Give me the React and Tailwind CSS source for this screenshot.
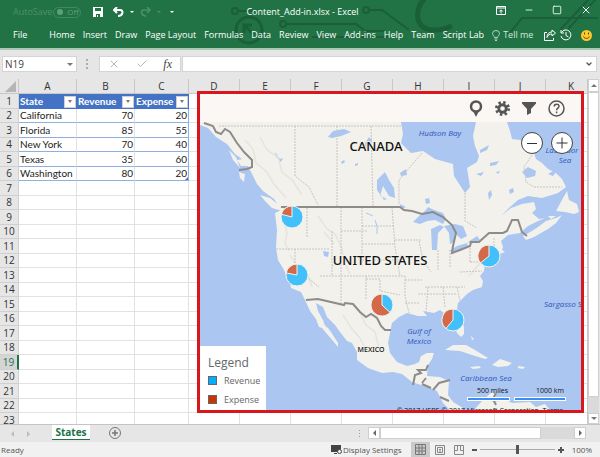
import React, { useState } from 'react';
import {
  FiMinus,
  FiSquare,
  FiX,
  FiCheck,
  FiChevronDown,
} from 'react-icons/fi';

const tabs = ['Home', 'Insert', 'Draw', 'Page Layout', 'Formulas', 'Data', 'Review', 'View', 'Add-ins', 'Help', 'Team', 'Script Lab'];

const columns = ['A', 'B', 'C', 'D', 'E', 'F', 'G', 'H', 'I', 'J', 'K'];

const states = [
  { state: 'California', revenue: 70, expense: 20 },
  { state: 'Florida', revenue: 85, expense: 55 },
  { state: 'New York', revenue: 70, expense: 40 },
  { state: 'Texas', revenue: 35, expense: 60 },
  { state: 'Washington', revenue: 80, expense: 20 },
];

const pies = [
  { name: 'Washington', x: 292, y: 217, expense: 0.21 },
  { name: 'California', x: 297, y: 275, expense: 0.22 },
  { name: 'Texas', x: 382, y: 305, expense: 0.63 },
  { name: 'New York', x: 489, y: 256, expense: 0.36 },
  { name: 'Florida', x: 453, y: 320, expense: 0.39 },
];

// Thin circuit lines behind the title and the ribbon tabs
const Circuit = () => (
  <svg className="pointer-events-none absolute inset-y-0 left-[230px] h-12 w-[370px]" viewBox="230 0 370 48" fill="none" stroke="#1a5f38" strokeWidth="2">
    <circle cx="235" cy="11" r="3" />
    <path d="M238 11h17" />
    <circle cx="249" cy="30" r="13" strokeWidth="3" />
    <path d="M254 35l-9-9M244 33v-8h8" strokeWidth="3" />
    <circle cx="283" cy="24" r="3" />
    <path d="M286 24h70l9 7h20" />
    <circle cx="366" cy="10" r="3" />
    <path d="M369 10h13l27 20" />
    <path d="M312 37h78" />
    <path d="M425 -2c-12 12-10 33 10 32 8 0 12-2 17-4" strokeWidth="5" />
    <path d="M508 35l14-17h76M560 30l29-31M567 30l29-31" />
  </svg>
);

const TitleBar = () => (
  <div className="relative flex h-6 items-center pl-[13px] pr-2">
    <div className="flex flex-1 items-center">
      <span className="text-[9px] text-[#4e9068]">AutoSave</span>
      <button className="ml-[1px] flex h-[11px] w-7 items-center gap-1 rounded-full border border-[#418a5e] pl-[3px] text-[8px] leading-none text-[#5f9f7a]">
        <span className="size-[6px] rounded-full bg-[#5f9f7a]" />
        Off
      </button>
      <button aria-label="Save" className="ml-3">
        <svg className="size-[10px]" viewBox="0 0 10 10">
          <path d="M0 0h10v10H0z" fill="#fff" />
          <path d="M2 1h6v3H2zM3 7h4v3H3z" fill="#217346" />
          <path d="M4 8h1v2H4z" fill="#fff" />
        </svg>
      </button>
      <button aria-label="Undo" className="ml-[10px]">
        <svg className="h-[10px] w-[11px]" viewBox="0 0 11 10" fill="none" stroke="#fff" strokeWidth="2">
          <path d="M4 0L1 3l3 3M1 3h6c4 0 3 6-2 6" />
        </svg>
      </button>
      <button aria-label="Undo history" className="ml-[6px] border-x-2 border-t-2 border-x-transparent border-t-white" />
      <button aria-label="Redo" className="ml-[6px]">
        <svg className="h-[10px] w-[11px]" viewBox="0 0 11 10" fill="none" stroke="#4e9068" strokeWidth="1.5">
          <path d="M7 0l3 3-3 3M10 3H4c-4 0-3 6 2 6" />
        </svg>
      </button>
      <button aria-label="Redo history" className="ml-[6px] border-x-2 border-t-2 border-x-transparent border-t-[#4e9068]" />
      <button aria-label="Customize toolbar" className="ml-[9px] border-x-2 border-t-2 border-x-transparent border-t-white" />
    </div>
    <h1 className="whitespace-nowrap text-[9px] text-white">Content_Add-in.xlsx - Excel</h1>
    <div className="flex flex-1 items-center justify-end gap-[18px] pb-1 text-white">
      <button aria-label="Ribbon display options">
        <svg className="h-[9px] w-[10px]" viewBox="0 0 10 9" fill="none" stroke="#fff">
          <path d="M.5.5h9v8h-9zM.5 2h9M5 7.500V4M3.300 5.500L5 3.800l1.700 1.700" />
        </svg>
      </button>
      <button aria-label="Minimize"><FiMinus className="size-[10px]" /></button>
      <button aria-label="Maximize"><FiSquare className="size-[10px]" /></button>
      <button aria-label="Close"><FiX className="size-3" /></button>
    </div>
  </div>
);

const RibbonTabs = () => (
  <nav className="relative flex h-6 items-center whitespace-nowrap pb-[2px] pl-[13px] pr-2 text-[9px] text-white">
    <button className="mr-[22px]">File</button>
    <div className="flex gap-2">
      {tabs.map((tab) => (
        <button key={tab}>{tab}</button>
      ))}
    </div>
    <button className="ml-2 flex items-center gap-[3px] text-[#d5e6dc]">
      <svg className="h-[11px] w-2" viewBox="0 0 8 11" fill="none" stroke="#b5d3c1">
        <path d="M2.500 7.500C2.500 6 .5 5.500.5 3.500a3.500 3 0 017 0c0 2-2 2.500-2 4zM2.500 9h3M3 10.500h2" />
      </svg>
      Tell me
    </button>
    <div className="ml-auto flex items-center">
      <button aria-label="Share">
        <svg className="size-3" viewBox="0 0 12 12" fill="none" stroke="#fff">
          <path d="M3 3.500H.5v8h9V9M8 1l3.500 3L8 7V5C5.500 5 4 6 3 8.500 3 5 5 3 8 3z" />
        </svg>
      </button>
      <button aria-label="History" className="ml-1">
        <svg className="size-3" viewBox="0 0 12 12" fill="none" stroke="#fff">
          <path d="M1.500 3.500A5 5 0 111 7M1 1v3h3M6 3v3.500l2.500 1.500" />
        </svg>
      </button>
      <button aria-label="Feedback" className="ml-[9px]">
        <svg className="size-[11px]" viewBox="0 0 11 11">
          <circle cx="5.500" cy="5.500" r="5.500" fill="#fdc92c" />
          <path d="M3.500 2.500v2M7.500 2.500v2M2.500 6.500c1 2.500 5 2.500 6 0" fill="none" stroke="#5c4411" />
        </svg>
      </button>
    </div>
  </nav>
);

const FormulaBar = () => (
  <div className="flex h-[29px] items-center pb-[1px] pl-[2px] pr-[3px]">
    <div className="flex h-4 w-[75px] items-center border border-[#d4d4d4] bg-white pl-[2px] pr-[3px]">
      <input aria-label="Name box" defaultValue="N19" className="w-full min-w-0 text-[10px] leading-none text-[#444] outline-none" />
      <span className="border-x-[3px] border-t-[3px] border-x-transparent border-t-[#777]" />
    </div>
    <div className="mx-[9px] flex flex-col gap-[2px]">
      <span className="size-[2px] bg-[#aaa]" />
      <span className="size-[2px] bg-[#aaa]" />
      <span className="size-[2px] bg-[#aaa]" />
    </div>
    <div className="ml-[2px] flex h-4 w-[82px] items-center justify-between border border-[#d4d4d4] bg-white px-2 text-[#b5b5b5]">
      <button aria-label="Cancel"><FiX className="size-3" /></button>
      <button aria-label="Enter"><FiCheck className="size-3" /></button>
      <button aria-label="Insert function" className="font-['Liberation_Serif',serif] text-xs italic leading-none text-[#444]">fx</button>
    </div>
    <div className="ml-[1px] flex h-4 flex-1 items-center border border-[#d4d4d4] bg-white pr-[3px]">
      <input aria-label="Formula" className="h-3 min-w-0 flex-1 text-[10px] outline-none" />
      <FiChevronDown className="size-2 text-[#555]" strokeWidth={4} />
    </div>
  </div>
);

const FilterButton = ({ label }) => (
  <button aria-label={`Filter ${label}`} className="flex h-3 w-3 shrink-0 items-center justify-center border border-[#d0d0d0] bg-white">
    <span className="border-x-[2px] border-t-[3px] border-x-transparent border-t-[#777]" />
  </button>
);

// The last column runs past the right edge of the sheet
const Grid = () => (
  <table className="w-[calc(100%+10px)] table-fixed border-separate border-spacing-0 text-[10px] leading-[13px] text-[#222]">
    <colgroup>
      <col className="w-[19px]" />
      <col className="w-[58px]" />
      <col className="w-[58px]" />
      <col className="w-[54px]" />
      {columns.slice(3, 10).map((c) => (
        <col key={c} className="w-[51px]" />
      ))}
      <col />
    </colgroup>
    <thead>
      <tr className="h-[15px] bg-[#e6e6e6]">
        <th className="border-b border-r border-[#c8c8c8] p-0">
          <span className="float-right mr-[2px] border-b-[11px] border-l-[11px] border-b-[#b5b5b5] border-l-transparent" />
        </th>
        {columns.map((c) => (
          <th key={c} className="border-b border-r border-[#c8c8c8] p-0 font-normal text-[#333]">{c}</th>
        ))}
      </tr>
    </thead>
    <tbody>
      {Array.from({ length: 23 }, (_, i) => {
        const row = i + 1;
        const data = states[i - 1];
        const cell = data ? 'border-b-[#8fb0de]' : 'border-b-[#e2e2e2]';
        return (
          <tr key={row} className="odd:h-[15px] even:h-[14px]">
            <th
              className={`border-b border-[#d0d0d0] p-0 font-normal ${row === 19 ? 'border-r-2 border-r-[#217346] bg-[#d5d5d5] text-[#217346]' : 'border-r bg-[#e6e6e6] text-[#333]'}`}
            >
              {row}
            </th>
            {row === 1 ? (
              ['State', 'Revenue', 'Expense'].map((label) => (
                <th key={label} className="bg-[#4472c4] p-0">
                  <div className="flex items-center justify-between px-[1px] font-['Lato',sans-serif] font-bold text-white">
                    {label}
                    <FilterButton label={label} />
                  </div>
                </th>
              ))
            ) : (
              <>
                <td className={`border-b border-r p-0 pl-[1px] font-['Lato',sans-serif] ${cell} border-r-[#e2e2e2]`}>{data?.state}</td>
                <td className={`border-b border-r p-0 pr-[1px] text-right font-['Lato',sans-serif] ${cell} border-r-[#e2e2e2]`}>{data?.revenue}</td>
                <td className={`relative border-b border-r p-0 pr-[1px] text-right font-['Lato',sans-serif] ${cell} ${data ? 'border-r-[#8fb0de]' : 'border-r-[#e2e2e2]'}`}>
                  {data?.expense}
                  {row === 6 && <span className="absolute bottom-0 right-0 border-b-[3px] border-l-[3px] border-b-[#4472c4] border-l-transparent" />}
                </td>
              </>
            )}
            {columns.slice(3).map((c) => (
              <td key={c} className="border-b border-r border-[#e2e2e2] p-0" />
            ))}
          </tr>
        );
      })}
    </tbody>
  </table>
);

const Pie = ({ x, y, expense }) => {
  const r = 11;
  const a = expense * Math.PI * 2;
  const ex = x - r * Math.sin(a);
  const ey = y - r * Math.cos(a);
  const large = expense > 0.5 ? 1 : 0;
  return (
    <g stroke="#f6f3ec" strokeWidth="1">
      <circle cx={x} cy={y} r={r} fill="#41c0fb" />
      <path d={`M${x} ${y}V${y - r}A${r} ${r} 0 ${large} 0 ${ex} ${ey}Z`} fill="#d4694a" />
    </g>
  );
};

const MapView = () => (
  <svg className="block h-full w-full" viewBox="200 122 381 289" preserveAspectRatio="xMinYMin slice" role="img" aria-label="Map of revenue and expense by state">
    <rect x="200" y="122" width="800" height="600" fill="#abc6f1" />

    {/* mainland */}
    <path
      fill="#f2f1ec"
      d="M200 122H507L510 131 512 139 520 140 527 143 533 150 536 159 542 163 548 169 556 173 562 179 566 187 558 193 542 198 528 196 518 200 510 207 501 216 511 208 522 204 534 202 536 209 532 213 539 219 545 218 538 221 528 226 520 233 508 235 501 241 503 247 502 250 505 252 497 255 490 260 485 264 484 271 480 276 483 281 482 287 473 290 467 294 458 303 457 310 461 318 464 327 464 334 461 337 457 333 455 327 450 318 440 310 434 313 423 311 427 316 418 316 407 313 399 317 392 323 390 333 388 343 390 353 397 362 407 366 415 364 419 362 421 356 427 353 434 353 432 359 428 365 427 376 440 377 449 381 448 395 453 402 463 408 459 411H451L443 403 440 397 437 391 427 387 412 382 402 374 393 372 382 373 368 368 357 360 357 352 352 343 347 341 340 332 335 325 327 317 323 307 316 303 318 311 325 324 331 332 338 343 338 347 333 341 327 334 322 328 319 327 316 319 310 311 305 300 301 292 291 288 290 282 287 278 284 270 278 260 276 248 277 230 275 213 281 210 274 199 263 191 257 184 252 174 246 162 235 154 227 144 216 137 208 128 200 125Z"
    />
    {/* west coast islands */}
    <path fill="#f2f1ec" d="M260 195L270 198 280 206 282 211 272 208 265 201ZM239 172L245 174 244 182 240 178ZM229 150L236 157 240 168 233 160ZM237 160L249 158 250 166 241 166Z" />
    {/* Newfoundland, Nova Scotia */}
    <path fill="#f2f1ec" d="M546 221L556 218 562 215 556 223 548 229 534 237 526 240 523 236 532 231 538 227ZM556 211L563 198 567 191 569 200 577 204 579 212 574 214 565 212ZM548 216h8l-5 3Z" />
    {/* Caribbean and South America */}
    <path fill="#f2f1ec" d="M445 350L453 345 466 345 475 350 488 358 485 359 472 355 460 351ZM492 365L500 359 512 363 508 366 498 367ZM470 367l9-1 2 2-8 1zM518 366l7 1-2 2-5-1zM473 411L482 401 492 392 496 396 492 402 506 400 512 403 530 402 536 407 545 404 551 411ZM471 336l3 3-2 1z" />

    {/* Hudson Bay */}
    <path fill="#abc6f1" d="M401 122L403 134 401 143 411 153 423 151 435 159 453 164 454 176 465 193 470 187 467 168 477 162 479 156 475 146 473 136 476 122Z" />
    {/* lakes */}
    <g fill="#abc6f1">
      <path d="M413 222L420 215 425 211 428 207 434 210 443 213 446 219 443 224 435 220 427 221 420 224ZM431 229L440 225 444 227 438 233 437 250 432 250ZM444 226L455 224 463 226 467 236 461 239 455 233 454 242 450 244 449 233ZM449 251L457 246 467 243 468 246 457 251ZM468 242L477 236 480 240 471 244Z" />
      <path d="M328 137L333 131 344 129 351 132 341 136 332 138ZM377 180L385 172 389 180 394 188 395 198 389 196 383 186 380 196 387 199 384 200 377 190ZM364 145L369 137 372 140 365 152ZM275 152l5 7 3-1-2 4-5-5zM323 322l5 3-1 3zM323 251l6 1-1 5-4-1zM400 173l6-4 1 6-6 1zM400 204l6 3-5 2zM425 199l4-1 1 5-4 1zM341 162l3-2 1 2-3 2zM355 164l3-1 0 2-3 1z" />
      <path d="M480 150l9-5-2 5-7 3zM476 174l8-2-3 4zM490 163l9-2-3 4-6 1zM522 172l6-5 8 4-1 5-8 2zM488 193l3-3 1 5-3 5zM509 190l4-2 1 4-4 2zM496 172l4-1-2 3zM548 174l12-7-7 9z" />
      <path d="M366 213l5 2 2 1M375 220l2 6v8" fill="none" stroke="#abc6f1" />
    </g>

    {/* relief */}
    <g fill="none" stroke="#e5e4dd" strokeWidth="1.500">
      <path d="M245 140l8 9 3 14 10 8 8 13 12 14M260 137l7 13 11 7 4 15 11 9 9 14M284 221l3 12-2 10 4 8M290 255l8 12 10 8 4 12M318 216l9 13 8 5 7 14 2 16M324 232l10 12M331 266l13-4 6 12M343 315l9 14 8 9 7 14M359 311l7 14 9 7 4 16M469 276l12-14 6-9" />
    </g>

    {/* province and state lines */}
    <g fill="none" stroke="#c7c6c2" strokeDasharray="2 1">
      <path d="M219 126H402M295 126v50l14 11 9 18M337 126v81M371 126l2 81M422 153l-23 27v25M465 193v28l12 7M532 155l-8 12 2 15 8 5h28" />
      <path d="M276 249h53M295 249v18l24 20M307 208v29M332 231v45M320 276h85M341 231v45M341 304v-28M341 207v24h27M362 207v59M362 226h32M362 244h32M362 260h38M392 207l3 40 5 29M366 276v24M366 279h14v12l20 4M395 240h27M400 256h22M405 276v20l4 17M419 241l4 19 8 12M405 280h18M438 250v20M450 250v17M425 287h40M418 294h38M428 287l-2 25M443 287l2 20M457 287l3 14M470 245v18M470 262h17M494 238v18M405 303h15M460 272l22-1" />
    </g>

    {/* country borders */}
    <g fill="none" stroke="#8d8c8a" strokeWidth="2">
      <path d="M204 123l9 3 3 6 5 2 4-5 5 3 7 11 7 9 8 8v7l-5 2-8 1" />
      <path d="M281 207H400l4 3 8 1 10 3 11-2 10 5 9 8 4 8-3 13-1 7 8-3 10-4 1-4h8l10-9h14l4-2 5-11 6 0 4 12 5 4" />
      <path d="M306 300l12-1 26 6 1-2 8 1 7 8 6 5 5-3 6 4 4 8 4 4h6" />
      <path d="M413 385l2-10 6-2-3-3h8l2-5M422 383l4-5M422 384l9 4M433 390l6-7 11-3M440 397l9 4M496 393l-3 6 3 6" />
    </g>

    {/* place names */}
    <g fill="#111" stroke="#f2f1ec" strokeWidth="2" paintOrder="stroke" textAnchor="middle" fontWeight="500" fontFamily="'Noto Sans', 'Open Sans', sans-serif">
      <text x="376" y="151" fontSize="13">CANADA</text>
      <text x="380" y="265" fontSize="13">UNITED STATES</text>
      <text x="371" y="352" fontSize="7">MEXICO</text>
    </g>
    <g fill="#2f55bd" textAnchor="middle" fontSize="8" fontStyle="italic" fontFamily="'Open Sans', sans-serif">
      <text x="440" y="136">Hudson Bay</text>
      <text x="562" y="153">Labrador</text>
      <text x="565" y="163">Sea</text>
      <text x="544" y="307" textAnchor="start">Sargasso Sea</text>
      <text x="419" y="334">Gulf of</text>
      <text x="419" y="344">Mexico</text>
      <text x="486" y="381">Caribbean Sea</text>
    </g>

    {pies.map((pie) => (
      <Pie key={pie.name} {...pie} />
    ))}

    {/* scale */}
    <g fontSize="7" fill="#111" fontFamily="'Open Sans', sans-serif" textAnchor="end">
      <path d="M467 397h43v4h-43zM514 397h52v4h-52z" fill="#fff" />
      <path d="M468 398h41v2h-41zM515 398h50v2h-50z" fill="#3b8ef5" />
      <text x="508" y="393">500 miles</text>
      <text x="564" y="393">1000 km</text>
      <text x="563" y="413">© 2017 HERE © 2017 Microsoft Corporation, Terms</text>
    </g>
  </svg>
);

const MapAddin = () => (
  <section className="absolute bottom-[11px] left-[197px] right-[3px] top-3 flex flex-col border-[3px] border-[#d9161b] bg-[#fbf7f4]">
    <div className="flex h-7 shrink-0 items-center justify-end gap-3 pr-4">
      <button aria-label="Pins">
        <svg className="h-[17px] w-[14px]" viewBox="0 0 14 17">
          <circle cx="7" cy="6.500" r="5" fill="none" stroke="#555" strokeWidth="2.500" />
          <path d="M4 11h6l-3 6z" fill="#555" />
        </svg>
      </button>
      <button aria-label="Settings">
        <svg className="size-[15px]" viewBox="0 0 16 16" fill="none" stroke="#555">
          <circle cx="8" cy="8" r="4" strokeWidth="3" />
          <circle cx="8" cy="8" r="6.500" strokeWidth="3" strokeDasharray="2.550 2.550" />
        </svg>
      </button>
      <button aria-label="Filter">
        <svg className="h-[13px] w-[14px]" viewBox="0 0 14 13">
          <path d="M0 0h14v1.500L9 7v4l-4 2V7L0 1.500z" fill="#555" />
        </svg>
      </button>
      <button aria-label="Help">
        <svg className="size-[17px]" viewBox="0 0 17 17" fill="none" stroke="#555" strokeWidth="1.500">
          <circle cx="8.500" cy="8.500" r="7.500" />
          <path d="M6.200 6.500c0-3 4.800-3 4.800-.3 0 2-2.400 1.800-2.400 4M8.600 11.500v1.700" />
        </svg>
      </button>
    </div>
    <div className="relative min-h-0 flex-1">
      <div className="absolute inset-0 overflow-hidden">
        <MapView />
      </div>
      <div className="absolute right-2 top-[10px] flex gap-2">
        <button aria-label="Zoom out" className="flex size-[22px] items-center justify-center rounded-full border border-[#444] bg-white">
          <span className="h-px w-[10px] bg-[#333]" />
        </button>
        <button aria-label="Zoom in" className="flex size-[22px] items-center justify-center rounded-full border border-[#444] bg-white">
          <svg className="size-3" viewBox="0 0 12 12" stroke="#333"><path d="M6 .5v11M.5 6h11" /></svg>
        </button>
      </div>
      <div className="absolute bottom-0 left-0 w-[66px] bg-white pb-[1px] pl-2 pt-[9px] text-[#666]">
        <h2 className="text-xs leading-4">Legend</h2>
        <ul className="text-[9px] leading-[19px]">
          <li className="flex items-center gap-[7px]"><span className="size-[9px] border border-[#666] bg-[#00aeff]" />Revenue</li>
          <li className="flex items-center gap-[7px]"><span className="size-[9px] border border-[#666] bg-[#cc3300]" />Expense</li>
        </ul>
      </div>
    </div>
  </section>
);

const VerticalScroll = () => (
  <div className="flex w-[13px] shrink-0 flex-col border-l border-[#c8c8c8] bg-[#e6e6e6] pr-[1px]">
    <button aria-label="Scroll up" className="flex h-[13px] items-center justify-center border border-[#cfcfcf] bg-white">
      <span className="border-x-[3px] border-b-[3px] border-x-transparent border-b-[#777]" />
    </button>
    <div className="flex-1 bg-[#dadada] pb-4">
      <div className="h-full border border-[#cfcfcf] bg-white" />
    </div>
    <button aria-label="Scroll down" className="flex h-[11px] items-center justify-center border border-[#cfcfcf] bg-white">
      <span className="border-x-[3px] border-t-[3px] border-x-transparent border-t-[#777]" />
    </button>
  </div>
);

const SheetTabs = () => (
  <div className="flex h-[18px] items-start border-t border-[#c4c4c4] bg-[#e6e6e6]">
    <button aria-label="Previous sheet" className="ml-[11px] mt-[6px] border-y-[3px] border-r-[3px] border-y-transparent border-r-[#bbb]" />
    <button aria-label="Next sheet" className="ml-[13px] mt-[6px] border-y-[3px] border-l-[3px] border-y-transparent border-l-[#bbb]" />
    <button className="ml-[22px] h-[15px] w-[38px] border-b border-[#217346] bg-white text-[10px] font-bold leading-none text-[#217346]">States</button>
    <button aria-label="New sheet" className="ml-[19px] mt-[2px]">
      <svg className="size-3" viewBox="0 0 12 12" fill="none" stroke="#777">
        <circle cx="6" cy="6" r="5.500" />
        <path d="M6 3v6M3 6h6" strokeWidth="1.500" />
      </svg>
    </button>
    <div className="ml-auto mr-[14px] mt-[2px] flex h-3 w-[227px] items-center">
      <div className="mr-2 flex flex-col gap-[2px]">
        <span className="size-[1px] bg-[#999]" />
        <span className="size-[1px] bg-[#999]" />
        <span className="size-[1px] bg-[#999]" />
      </div>
      <button aria-label="Scroll left" className="flex h-3 w-3 items-center justify-center border border-[#cfcfcf] bg-white">
        <span className="border-y-[3px] border-r-[3px] border-y-transparent border-r-[#666]" />
      </button>
      <div className="h-3 flex-1 bg-[#dadada] pr-[33px]">
        <div className="h-full border border-[#cfcfcf] bg-white" />
      </div>
      <button aria-label="Scroll right" className="flex h-3 w-3 items-center justify-center border border-[#cfcfcf] bg-white">
        <span className="border-y-[3px] border-l-[3px] border-y-transparent border-l-[#666]" />
      </button>
    </div>
  </div>
);

const StatusBar = ({ zoom, setZoom }) => (
  <footer className="flex h-[15px] items-center bg-[#f1f1f1] pl-[1px] pr-2 text-[8px] text-[#555]">
    <span>Ready</span>
    <button className="ml-auto flex items-center gap-[1px]">
      <svg className="h-[9px] w-[11px]" viewBox="0 0 11 9" fill="#444">
        <path d="M0 0h10v4L7 7H0zM3 8h3v1H3z" />
        <circle cx="8.500" cy="6.500" r="2" fill="#f1f1f1" stroke="#444" />
      </svg>
      Display Settings
    </button>
    <button aria-label="Normal view" className="ml-[9px] flex h-[15px] w-[19px] items-center justify-center bg-[#cacaca]">
      <svg className="size-[11px]" viewBox="0 0 11 11" fill="none" stroke="#777"><path d="M.5.500h10v10H.5zM.5 4h10M.5 7h10M4 .5v10M7 .5v10" /></svg>
    </button>
    <button aria-label="Page layout view" className="ml-[5px]">
      <svg className="size-[10px]" viewBox="0 0 10 10" fill="none" stroke="#888"><path d="M.5.500h9v9h-9zM2.500 2.500h5v5h-5zM4 4.500h2M4 6h2" /></svg>
    </button>
    <button aria-label="Page break view" className="ml-[9px]">
      <svg className="size-[10px]" viewBox="0 0 10 10" fill="none" stroke="#888"><path d="M.5.500h9v9h-9zM3.500.500v5h-3M6.500.500v5h3" /></svg>
    </button>
    <button aria-label="Zoom out" className="ml-2 h-[2px] w-[5px] bg-[#555]" />
    <input
      type="range"
      aria-label="Zoom"
      min="20"
      max="180"
      value={zoom}
      onChange={(e) => setZoom(Number(e.target.value))}
      className="mx-[3px] h-[9px] w-[75px] appearance-none bg-[linear-gradient(#aaa,#aaa)] bg-[length:100%_1px] bg-center bg-no-repeat [&::-webkit-slider-thumb]:h-[9px] [&::-webkit-slider-thumb]:w-[3px] [&::-webkit-slider-thumb]:appearance-none [&::-webkit-slider-thumb]:bg-[#555]"
    />
    <button aria-label="Zoom in">
      <svg className="size-[6px]" viewBox="0 0 6 6" stroke="#555" strokeWidth="2"><path d="M3 0v6M0 3h6" /></svg>
    </button>
    <span className="ml-2">{zoom}%</span>
  </footer>
);

const App = () => {
  const [zoom, setZoom] = useState(100);

  return (
    <div className="flex min-h-screen flex-col bg-[#e6e6e6] font-['Open_Sans',sans-serif]">
      <header className="relative overflow-hidden border-b-2 border-[#a9c8b6] bg-[#217346]">
        <Circuit />
        <TitleBar />
        <RibbonTabs />
      </header>
      <FormulaBar />
      <main className="flex h-[345px] grow">
        <div className="relative min-w-0 flex-1 overflow-hidden bg-white">
          <Grid />
          <MapAddin />
        </div>
        <VerticalScroll />
      </main>
      <SheetTabs />
      <StatusBar zoom={zoom} setZoom={setZoom} />
    </div>
  );
};

export default App;
